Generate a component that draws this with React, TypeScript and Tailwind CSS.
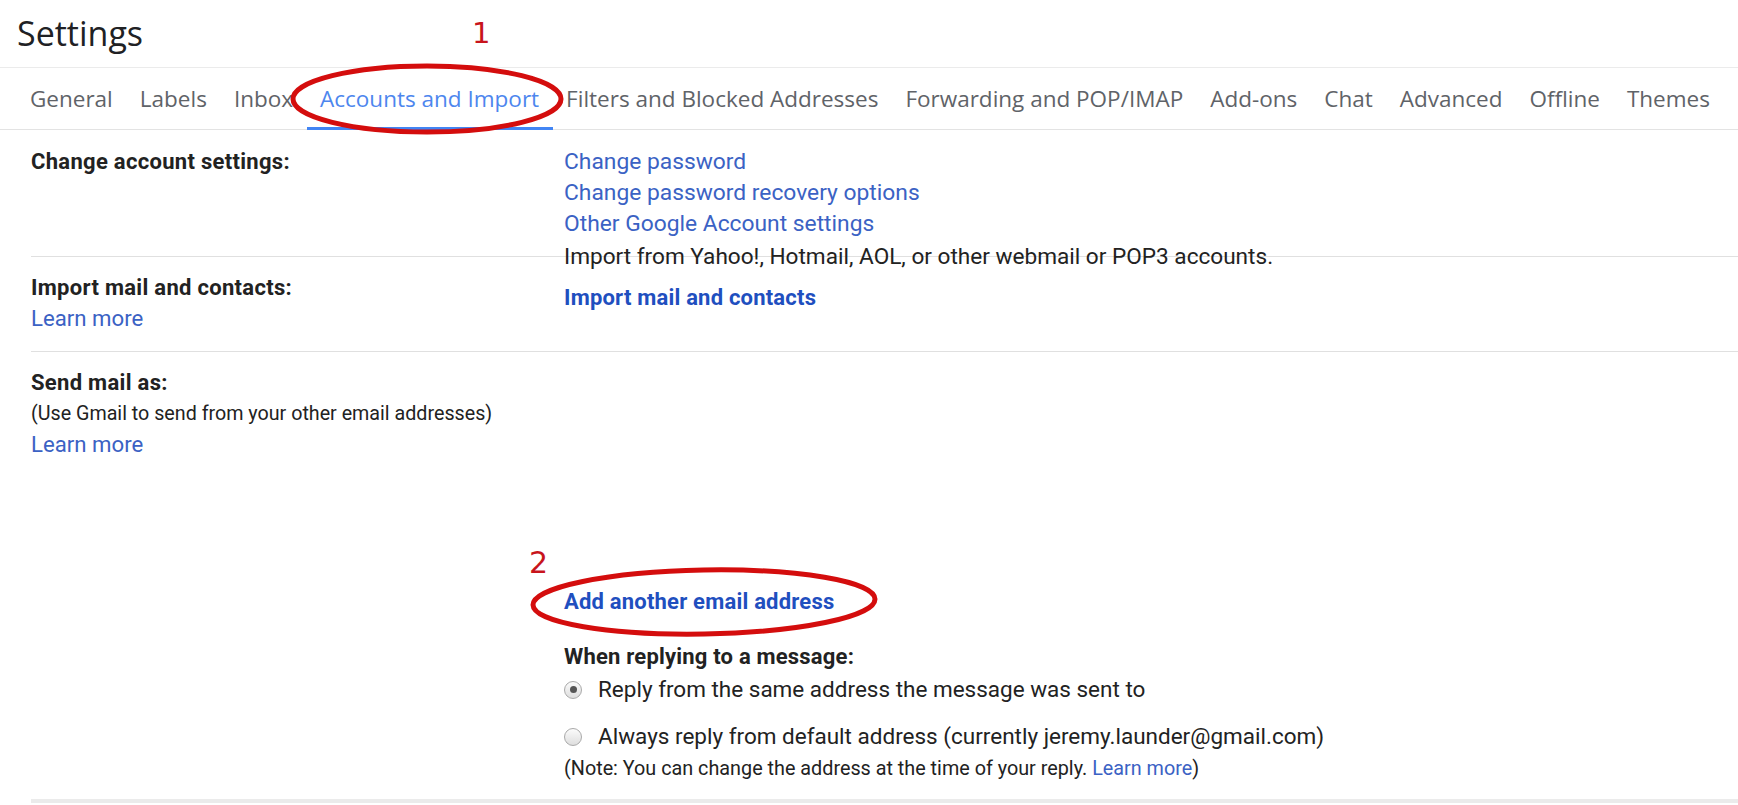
import React from "react";

const tabs = [
  "General",
  "Labels",
  "Inbox",
  "Accounts and Import",
  "Filters and Blocked Addresses",
  "Forwarding and POP/IMAP",
  "Add-ons",
  "Chat",
  "Advanced",
  "Offline",
  "Themes",
];

function Radio({ checked }: { checked?: boolean }) {
  return (
    <span className="w-[18px] h-[18px] shrink-0 rounded-full border border-[#a9a9a9] bg-gradient-to-b from-[#fbfbfb] to-[#dedede] flex items-center justify-center">
      {checked && <span className="w-[7px] h-[7px] rounded-full bg-[#555]" />}
    </span>
  );
}

export default function App() {
  return (
    <div className="relative w-full h-[805px] overflow-hidden bg-white font-['Roboto',sans-serif]">
      {/* Title */}
      <div className="h-[68px] border-b border-[#ebebeb] pl-[17px] flex items-center">
        <h1 className="font-['Open_Sans',sans-serif] text-[34px] leading-none text-[#202124] pb-[2px]">
          Settings
        </h1>
      </div>

      {/* Tabs */}
      <nav className="h-[62px] border-b border-[#e3e3e3] pl-[16.5px] flex items-stretch">
        {tabs.map((t) => {
          const active = t === "Accounts and Import";
          return (
            <div
              key={t}
              className={
                "relative px-[13.5px] flex items-center font-['Open_Sans',sans-serif] text-[22.5px] font-medium whitespace-nowrap " +
                (active ? "text-[#4d86ee]" : "text-[#5f6368]")
              }
            >
              {t}
              {active && (
                <span className="absolute left-0 right-0 bottom-[-1px] h-[3px] bg-[#4285f4]" />
              )}
            </div>
          );
        })}
      </nav>

      {/* Body */}
      <div className="ml-[31px]">
        {/* Change account settings */}
        <section className="flex border-b border-[#e0e0e0] pt-[16px] pb-[17px]">
          <div className="w-[533px] shrink-0 text-[22px] font-bold leading-[31px] tracking-[0.3px] text-[#222]">
            Change account settings:
          </div>
          <div className="flex flex-col text-[22.8px] leading-[31px] text-[#3b62c4]">
            <a>Change password</a>
            <a>Change password recovery options</a>
            <a>Other Google Account settings</a>
          </div>
        </section>

        {/* Import mail and contacts */}
        <section className="flex border-b border-[#e0e0e0] pt-[15px] pb-[17px]">
          <div className="w-[533px] shrink-0 leading-[31px]">
            <div className="text-[22px] font-bold tracking-[0.3px] text-[#222]">
              Import mail and contacts:
            </div>
            <a className="block text-[22.2px] text-[#3b62c4]">Learn more</a>
          </div>
          <div className="flex flex-col leading-[31px]">
            <div className="-mt-[31.5px] text-[22.6px] text-[#222]">
              Import from Yahoo!, Hotmail, AOL, or other webmail or POP3 accounts.
            </div>
            <a className="mt-[10px] text-[22px] font-bold tracking-[0.2px] text-[#1f4fbf]">
              Import mail and contacts
            </a>
          </div>
        </section>

        {/* Send mail as */}
        <section className="flex pt-[15px] pb-[16.5px]">
          <div className="w-[533px] shrink-0">
            <div className="text-[22px] font-bold leading-[31px] tracking-[0.3px] text-[#222]">
              Send mail as:
            </div>
            <div className="text-[19.7px] leading-[32px] text-[#222]">
              (Use Gmail to send from your other email addresses)
            </div>
            <a className="block text-[22.2px] leading-[28px] text-[#3b62c4]">Learn more</a>
          </div>
          <div className="flex flex-col">
            <a className="mt-[219px] text-[22px] font-bold leading-[31px] tracking-[0.2px] text-[#1f4fbf]">
              Add another email address
            </a>
            <div className="mt-[24px] text-[22px] font-bold leading-[31px] tracking-[0.2px] text-[#222]">
              When replying to a message:
            </div>
            <label className="mt-[2px] h-[31px] flex items-center gap-[16px] text-[22.5px] text-[#222]">
              <Radio checked />
              Reply from the same address the message was sent to
            </label>
            <label className="mt-[16px] h-[31px] flex items-center gap-[16px] text-[22.5px] text-[#222]">
              <Radio />
              Always reply from default address (currently jeremy.launder@gmail.com)
            </label>
            <div className="mt-[2.5px] text-[19.8px] leading-[28px] text-[#222]">
              (Note: You can change the address at the time of your reply.{" "}
              <a className="text-[#3b62c4]">Learn more</a>)
            </div>
          </div>
        </section>
        <div className="h-[4px] bg-[#ebebeb]" />
      </div>

      {/* Annotations */}
      <span className="absolute left-[472px] top-[19px] font-['DejaVu_Sans',sans-serif] text-[29px] leading-none text-[#c8141c]">
        1
      </span>
      <svg className="absolute left-[289px] top-[62px]" width="276" height="74" viewBox="0 0 276 74">
        <ellipse cx="138" cy="37" rx="134" ry="33" fill="none" stroke="#d40d0d" strokeWidth="5" />
      </svg>
      <span className="absolute left-[529px] top-[548px] font-['DejaVu_Sans',sans-serif] text-[30px] leading-none text-[#c8141c]">
        2
      </span>
      <svg className="absolute left-[528px] top-[565px]" width="352" height="74" viewBox="0 0 352 74">
        <ellipse cx="176" cy="37" rx="171" ry="32" fill="none" stroke="#d40d0d" strokeWidth="5" transform="rotate(-1 176 37)" />
      </svg>
    </div>
  );
}
